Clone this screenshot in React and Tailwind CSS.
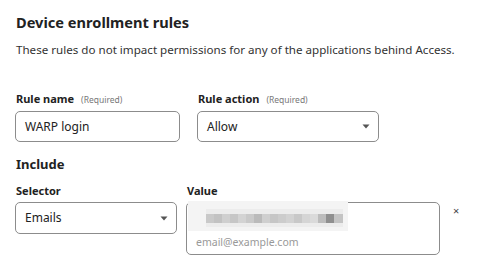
import React from "react";

function Caret() {
  return (
    <svg width="8" height="5" viewBox="0 0 8 5" className="shrink-0">
      <path d="M0.5 0.5 L7.5 0.5 L4 4.5 Z" fill="#555" />
    </svg>
  );
}

function Label({ children, req }) {
  return (
    <div className="text-[11px] leading-4 font-bold text-[#222] mb-[3px] whitespace-nowrap">
      {children}
      {req && <span className="ml-[7px] text-[8.5px] font-normal text-[#777]">(Required)</span>}
    </div>
  );
}

export default function App() {
  return (
    <div className="w-[480px] h-[258px] bg-white overflow-hidden pl-[15px] pt-3 font-['Noto_Sans',sans-serif] text-[#222]">
      <h2 className="pl-px text-[14.6px] leading-5 font-bold">Device enrollment rules</h2>
      <p className="pl-px mt-[10px] text-[11.6px] leading-4 text-[#333] whitespace-nowrap">
        These rules do not impact permissions for any of the applications behind Access.
      </p>

      <div className="mt-[33px] flex gap-[17px]">
        <div className="w-[165px]">
          <div className="pl-px"><Label req>Rule name</Label></div>
          <div className="h-[31px] rounded-[5px] border border-[#8c8c8c] flex items-center px-[9px] text-[12px]">
            WARP login
          </div>
        </div>
        <div className="w-[182px]">
          <div className="pl-px"><Label req>Rule action</Label></div>
          <div className="h-[31px] rounded-[5px] border border-[#8c8c8c] flex items-center justify-between pl-[9px] pr-[8px] text-[12px]">
            <span>Allow</span>
            <Caret />
          </div>
        </div>
      </div>

      <div className="pl-px mt-[13px] text-[13px] leading-[18px] font-bold">Include</div>

      <div className="mt-[10px] flex gap-[9px] items-start">
        <div className="w-[162px]">
          <div className="pl-px"><Label>Selector</Label></div>
          <div className="mt-px h-[32px] rounded-[5px] border border-[#8c8c8c] flex items-center justify-between pl-[9px] pr-[8px] text-[12px]">
            <span>Emails</span>
            <Caret />
          </div>
        </div>
        <div className="w-[254px]">
          <div className="pl-px"><Label>Value</Label></div>
          <div className="relative mt-px h-[53px] rounded-[5px] border border-[#8c8c8c] flex flex-col justify-end pl-[9px] pb-[4px]">
            <span className="text-[10.5px] leading-4 text-[#999]">email@example.com</span>
            <div className="absolute left-[1px] top-[-2px] w-[160px] h-[30px] bg-[#f4f4f4] flex flex-col">
              <div className="h-[8px]" />
              <div className="h-[5px] ml-[18px] w-[137px] bg-[#ececec]" />
              <div className="flex h-[9px] ml-[18px]">
                <div className="w-[8px] bg-[#c9c9c9]" />
                <div className="w-[8px] bg-[#c2c2c2]" />
                <div className="w-[8px] bg-[#cfcfcf]" />
                <div className="w-[8px] bg-[#c6c6c6]" />
                <div className="w-[8px] bg-[#d3d3d3]" />
                <div className="w-[8px] bg-[#c9c9c9]" />
                <div className="w-[8px] bg-[#bababa]" />
                <div className="w-[8px] bg-[#cfcfcf]" />
                <div className="w-[8px] bg-[#c6c6c6]" />
                <div className="w-[8px] bg-[#cccccc]" />
                <div className="w-[8px] bg-[#d2d2d2]" />
                <div className="w-[8px] bg-[#c8c8c8]" />
                <div className="w-[8px] bg-[#d5d5d5]" />
                <div className="w-[8px] bg-[#dadada]" />
                <div className="w-[8px] bg-[#bcbcbc]" />
                <div className="w-[8px] bg-[#8f8f8f]" />
                <div className="w-[9px] bg-[#c4c4c4]" />
              </div>
              <div className="h-[4px] ml-[18px] w-[137px] bg-[#ececec]" />
            </div>
          </div>
        </div>
        <div className="mt-[22px] ml-[4px] text-[11px] leading-3 text-[#444]">×</div>
      </div>
    </div>
  );
}
